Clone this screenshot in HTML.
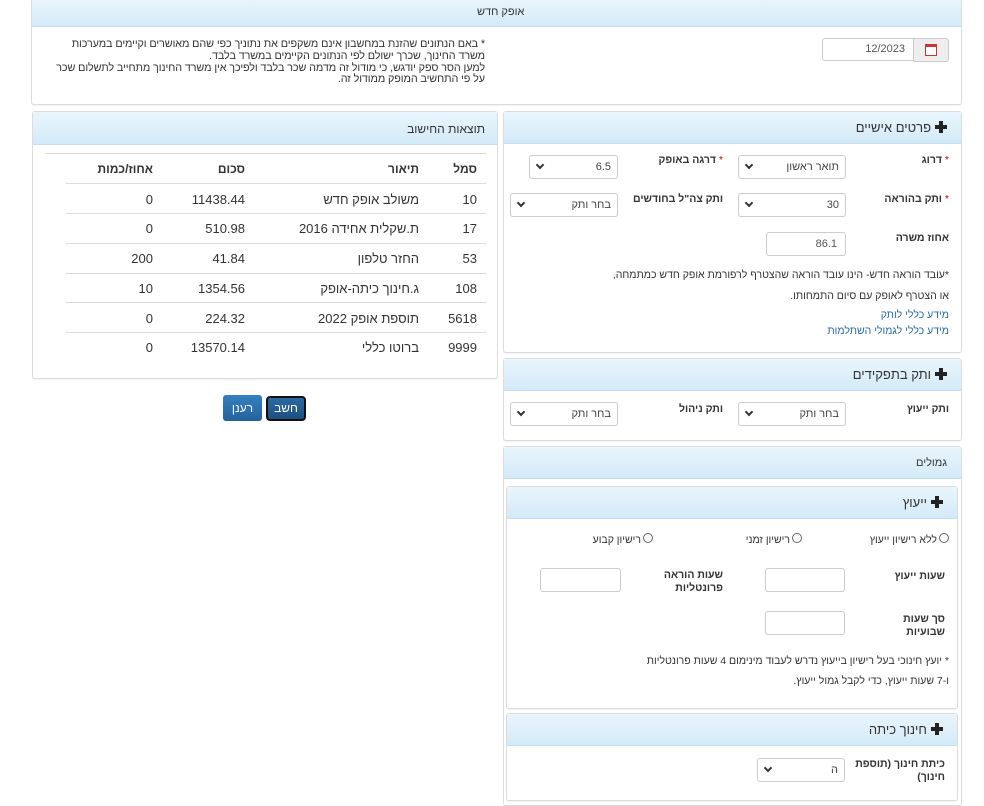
<!DOCTYPE html>
<html><head><meta charset="utf-8">
<style>
*{box-sizing:border-box;margin:0;padding:0}
body{width:984px;height:802px;background:#fff;font-family:"Liberation Sans","Noto Sans CJK SC",sans-serif;font-size:12px;color:#333;position:relative;overflow:hidden;direction:rtl}
.a{position:absolute}
.panel{position:absolute;border:1px solid #dcdcdc;border-radius:3px;background:#fff;box-shadow:0 1px 1px rgba(0,0,0,.05)}
.hd{position:absolute;left:0;right:0;top:0;background:linear-gradient(#eaf5fc,#d3eaf8);border-bottom:1px solid #c4e0f1}
.ht{position:absolute;font-size:13px;color:#333;white-space:nowrap}
.plus{display:inline-block;width:12px;height:12px;position:relative;vertical-align:-1px;margin-left:4px}
.plus:before{content:"";position:absolute;left:4px;top:0;width:4px;height:12px;background:#222}
.plus:after{content:"";position:absolute;left:0;top:4px;width:12px;height:4px;background:#222}
.sel{position:absolute;height:24px;border:1px solid #ccc;border-radius:3px;background:#fff;font-size:11px;color:#444}
.sel span{position:absolute;right:6px;top:5px}
.sel i{position:absolute;left:7px;top:6px;width:6px;height:6px;border-right:2px solid #333;border-bottom:2px solid #333;transform:rotate(45deg)}
.inp{position:absolute;height:24px;border:1px solid #ccc;border-radius:3px;background:#fff;color:#555;font-size:11px}
.inp span{position:absolute;right:8px;top:5px}
.lb{position:absolute;font-weight:bold;font-size:10.5px;color:#333;white-space:nowrap;text-align:right}
.req{color:#c00;font-weight:normal}
.tx{position:absolute;white-space:nowrap;font-size:10.5px;color:#333}
.lnk{position:absolute;white-space:nowrap;color:#2a6ea6;font-size:10.5px}
.td{position:absolute;font-size:13px;color:#333;white-space:nowrap}
.hl{position:absolute;height:1px;background:#ddd}
.rad{display:inline-block;width:10px;height:10px;border:1px solid #666;border-radius:50%;vertical-align:0;margin-left:2px}
</style></head><body>

<div class="panel" style="left:31px;top:-2px;width:931px;height:107px">
 <div class="hd" style="height:28px"></div>
 <div class="ht" style="left:445px;top:7px;font-size:11px">אופק חדש</div>
 <div class="inp" style="left:790px;top:39px;width:92px;height:23px;border-radius:3px 0 0 3px"><span style="top:4px">12/2023</span></div>
 <div class="a" style="left:881px;top:39px;width:36px;height:24px;background:#eee;border:1px solid #ccc;border-radius:0 3px 3px 0">
  <div class="a" style="left:11px;top:5px;width:12px;height:12px;border:1px solid #c33;border-top:3px solid #c33;background:#fff"></div></div>
 <div class="a" style="right:476px;top:40px;font-size:10.8px;line-height:11.8px;color:#333;white-space:nowrap;letter-spacing:-.1px">
  * באם הנתונים שהזנת במחשבון אינם משקפים את נתוניך כפי שהם מאושרים וקיימים במערכות<br>משרד החינוך, שכרך ישולם לפי הנתונים הקיימים במשרד בלבד.<br>למען הסר ספק יודגש, כי מודול זה מדמה שכר בלבד ולפיכך אין משרד החינוך מתחייב לתשלום שכר<br>על פי התחשיב המופק ממודול זה.</div>
</div>

<div class="panel" style="left:32px;top:111px;width:466px;height:268px">
 <div class="hd" style="height:33px"></div>
 <div class="ht" style="right:12px;top:10px;font-size:12px">תוצאות החישוב</div>
 <div class="hl" style="left:12px;width:441px;top:41px"></div>
 <div class="hl" style="left:33px;width:420px;top:71px"></div>
 <div class="hl" style="left:33px;width:420px;top:101px"></div>
 <div class="hl" style="left:33px;width:420px;top:131px"></div>
 <div class="hl" style="left:33px;width:420px;top:161px"></div>
 <div class="hl" style="left:33px;width:420px;top:190px"></div>
 <div class="hl" style="left:33px;width:420px;top:220px"></div>
 <div class="td" style="right:20px;top:50px;font-weight:bold;font-size:12px">סמל</div>
 <div class="td" style="right:78px;top:50px;font-weight:bold;font-size:12px">תיאור</div>
 <div class="td" style="right:252px;top:50px;font-weight:bold;font-size:12px">סכום</div>
 <div class="td" style="right:344px;top:50px;font-weight:bold;font-size:12px">אחוז/כמות</div>

 <div class="td" style="right:20px;top:80px">10</div><div class="td" style="right:78px;top:80px">משולב אופק חדש</div><div class="td" style="right:252px;top:80px">11438.44</div><div class="td" style="right:344px;top:80px">0</div>
 <div class="td" style="right:20px;top:109px">17</div><div class="td" style="right:78px;top:109px">ת.שקלית אחידה 2016</div><div class="td" style="right:252px;top:109px">510.98</div><div class="td" style="right:344px;top:109px">0</div>
 <div class="td" style="right:20px;top:139px">53</div><div class="td" style="right:78px;top:139px">החזר טלפון</div><div class="td" style="right:252px;top:139px">41.84</div><div class="td" style="right:344px;top:139px">200</div>
 <div class="td" style="right:20px;top:169px">108</div><div class="td" style="right:78px;top:169px">ג.חינוך כיתה-אופק</div><div class="td" style="right:252px;top:169px">1354.56</div><div class="td" style="right:344px;top:169px">10</div>
 <div class="td" style="right:20px;top:199px">5618</div><div class="td" style="right:78px;top:199px">תוספת אופק 2022</div><div class="td" style="right:252px;top:199px">224.32</div><div class="td" style="right:344px;top:199px">0</div>
 <div class="td" style="right:20px;top:228px">9999</div><div class="td" style="right:78px;top:228px">ברוטו כללי</div><div class="td" style="right:252px;top:228px">13570.14</div><div class="td" style="right:344px;top:228px">0</div>
</div>

<div class="a" style="left:266px;top:396px;width:40px;height:25px;background:linear-gradient(#2b6aa3,#1d4f80);border:2px solid #111;border-radius:4px;color:#fff;text-align:center;line-height:21px;font-size:12px">חשב</div>
<div class="a" style="left:223px;top:395px;width:39px;height:26px;background:linear-gradient(#3580c0,#25629c);border-radius:3px;color:#fff;text-align:center;line-height:26px;font-size:12px">רענן</div>

<div class="panel" style="left:503px;top:111px;width:459px;height:242px">
 <div class="hd" style="height:32px"></div>
 <div class="ht" style="right:14px;top:8px"><span class="plus"></span>פרטים אישיים</div>
 <div class="lb" style="right:12px;top:42px"><span class="req">*</span> דרוג</div>
 <div class="sel" style="left:234px;top:43px;width:108px"><span>תואר ראשון</span><i></i></div>
 <div class="lb" style="right:238px;top:42px"><span class="req">*</span> דרגה באופק</div>
 <div class="sel" style="left:25px;top:43px;width:89px"><span>6.5</span><i></i></div>
 <div class="lb" style="right:12px;top:81px"><span class="req">*</span> ותק בהוראה</div>
 <div class="sel" style="left:234px;top:81px;width:108px"><span>30</span><i></i></div>
 <div class="lb" style="right:238px;top:81px">ותק צה"ל בחודשים</div>
 <div class="sel" style="left:6px;top:81px;width:108px"><span>בחר ותק</span><i></i></div>
 <div class="lb" style="right:12px;top:120px">אחוז משרה</div>
 <div class="inp" style="left:262px;top:120px;width:80px"><span>86.1</span></div>
 <div class="tx" style="right:12px;top:157px">*עובד הוראה חדש- הינו עובד הוראה שהצטרף לרפורמת אופק חדש כמתמחה,</div>
 <div class="tx" style="right:12px;top:178px">או הצטרף לאופק עם סיום התמחותו.</div>
 <div class="lnk" style="right:12px;top:197px">מידע כללי לותק</div>
 <div class="lnk" style="right:12px;top:213px">מידע כללי לגמולי השתלמות</div>
</div>

<div class="panel" style="left:503px;top:358px;width:459px;height:83px">
 <div class="hd" style="height:32px"></div>
 <div class="ht" style="right:14px;top:8px"><span class="plus"></span>ותק בתפקידים</div>
 <div class="lb" style="right:12px;top:44px">ותק ייעוץ</div>
 <div class="sel" style="left:234px;top:43px;width:108px"><span>בחר ותק</span><i></i></div>
 <div class="lb" style="right:238px;top:44px">ותק ניהול</div>
 <div class="sel" style="left:6px;top:43px;width:108px"><span>בחר ותק</span><i></i></div>
</div>

<div class="panel" style="left:503px;top:446px;width:459px;height:360px">
 <div class="hd" style="height:32px"></div>
 <div class="ht" style="right:14px;top:10px;font-size:11px">גמולים</div>
</div>
<div class="panel" style="left:506px;top:486px;width:452px;height:223px">
 <div class="hd" style="height:32px"></div>
 <div class="ht" style="right:14px;top:8px"><span class="plus"></span>ייעוץ</div>
 <div class="tx" style="right:8px;top:46px"><span class="rad"></span>ללא רישיון ייעוץ</div>
 <div class="tx" style="right:155px;top:46px"><span class="rad"></span>רישיון זמני</div>
 <div class="tx" style="right:304px;top:46px"><span class="rad"></span>רישיון קבוע</div>
 <div class="lb" style="right:12px;top:83px">שעות ייעוץ</div>
 <div class="inp" style="left:258px;top:81px;width:80px"></div>
 <div class="lb" style="right:234px;top:82px;line-height:13px">שעות הוראה<br>פרונטליות</div>
 <div class="inp" style="left:33px;top:81px;width:81px"></div>
 <div class="lb" style="right:12px;top:126px;line-height:13px">סך שעות<br>שבועיות</div>
 <div class="inp" style="left:258px;top:124px;width:80px"></div>
 <div class="tx" style="right:8px;top:168px">* יועץ חינוכי בעל רישיון בייעוץ נדרש לעבוד מינימום 4 שעות פרונטליות</div>
 <div class="tx" style="right:8px;top:188px">ו-7 שעות ייעוץ, כדי לקבל גמול ייעוץ.</div>
</div>
<div class="panel" style="left:506px;top:713px;width:452px;height:88px">
 <div class="hd" style="height:32px"></div>
 <div class="ht" style="right:14px;top:8px"><span class="plus"></span>חינוך כיתה</div>
 <div class="lb" style="right:12px;top:44px;line-height:13px">כיתת חינוך (תוספת<br>חינוך)</div>
 <div class="sel" style="left:250px;top:44px;width:88px"><span>ה</span><i></i></div>
</div>

</body></html>
